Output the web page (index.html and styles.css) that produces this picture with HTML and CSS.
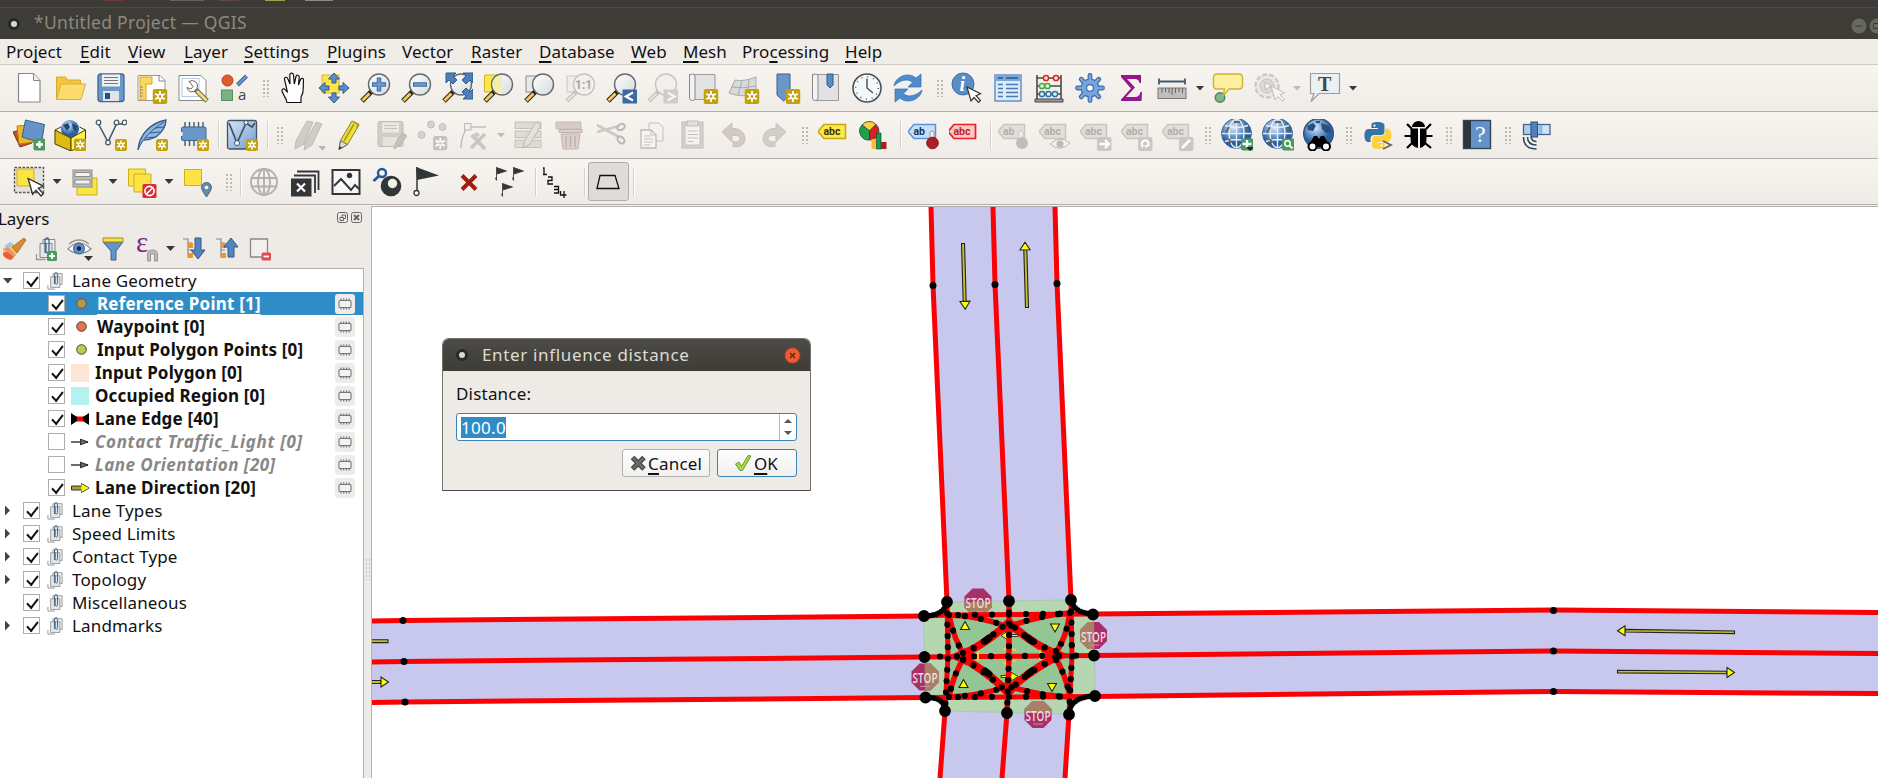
FILE: index.html
```html
<!DOCTYPE html>
<html lang="en">
<head>
<meta charset="utf-8">
<title>*Untitled Project — QGIS</title>
<link rel="stylesheet" href="styles.css">
</head>
<body>
<svg class="defs" width="0" height="0" aria-hidden="true">
<defs>
<linearGradient id="gGlass" x1="0" y1="0" x2="1" y2="1"><stop offset="0" stop-color="#fff"/><stop offset="1" stop-color="#d5dbdc"/></linearGradient>
<radialGradient id="gGlobe" cx=".4" cy=".3"><stop offset="0" stop-color="#dceaf8"/><stop offset=".55" stop-color="#6f9fd4"/><stop offset="1" stop-color="#2c5f9e"/></radialGradient>
<linearGradient id="gBlue" x1="0" y1="0" x2="1" y2="1"><stop offset="0" stop-color="#dbe7f3"/><stop offset="1" stop-color="#6f9bce"/></linearGradient>
<symbol id="star" viewBox="0 0 15 15"><rect width="15" height="15" rx="2.5" fill="#c4a20c"/><path d="M7.500 2v11M2.700 4.700l9.600 5.600M12.300 4.700l-9.600 5.600" stroke="#fff" stroke-width="1.900"/><circle cx="7.500" cy="7.500" r="3" fill="#fff"/><circle cx="7.500" cy="7.500" r="1.400" fill="#c4a20c"/></symbol>
<symbol id="gstar" viewBox="0 0 15 15"><rect width="15" height="15" rx="2.500" fill="#c6c3bf"/><path d="M7.500 2v11M2.700 4.700l9.600 5.600M12.300 4.700l-9.600 5.600" stroke="#fff" stroke-width="1.900"/><circle cx="7.500" cy="7.500" r="1.400" fill="#c6c3bf"/></symbol>
<symbol id="ptr" viewBox="0 0 16 18"><path d="M1 1l4 14 3-3.500 4.500 5 2-2-4.500-4.800 4.500-2z" fill="#fff" stroke="#333" stroke-width="1.200"/></symbol>
<symbol id="lens" viewBox="0 0 32 32"><path d="M13 19L3 29" stroke="#1f1f1f" stroke-width="5"/><path d="M10.500 21.500L3.500 28.500" stroke="#f4c854" stroke-width="3"/><circle cx="20" cy="12.500" r="10.500" fill="url(#gGlass)" stroke="#666b6e" stroke-width="1.400"/></symbol>
<symbol id="glens" viewBox="0 0 32 32"><path d="M13 19L3 29" stroke="#c2bfbb" stroke-width="4.500"/><path d="M10.500 21.500L3.500 28.500" stroke="#e4e0da" stroke-width="2.400"/><circle cx="20" cy="12.500" r="10.500" fill="#f2f0ec" stroke="#c8c5c1" stroke-width="1.400"/></symbol>

<symbol id="new" viewBox="0 0 32 32"><path d="M5.500 1.500h15l6.500 7v21.500H5.500z" fill="#fff" stroke="#888" stroke-width="1.200"/><path d="M20.500 1.500v7H27" fill="#eee" stroke="#888"/></symbol>
<symbol id="open" viewBox="0 0 32 32"><path d="M2.500 27V5h9l2 3h13v4" fill="#f3c53e" stroke="#d5a92b"/><path d="M2.500 27.500L7 12h24.500L27 27.500z" fill="#fcdc6c" stroke="#d9ae36"/></symbol>
<symbol id="save" viewBox="0 0 32 32"><rect x="3" y="2" width="26" height="27.500" rx="2.500" fill="#6b98cb" stroke="#3d6797" stroke-width="1.300"/><rect x="7" y="2.500" width="18" height="12" fill="#eef1f3"/><path d="M9 5.500h14M9 8.500h14M9 11.500h14" stroke="#777" stroke-width="1.200"/><rect x="8" y="19" width="16" height="10" fill="#dfe4ea"/><rect x="10" y="21" width="5" height="6" fill="#2d4d74"/></symbol>
<symbol id="layout" viewBox="0 0 32 32"><path d="M2 3.500h22l5 5v20H2z" fill="#fff" stroke="#999"/><path d="M4 5h12v7h-6v16H4z" fill="#fcd95c" stroke="#d5a521"/><path d="M4 15h3M4 18h3M4 21h3M4 24h3M23 3v6h6" stroke="#888" fill="none"/><use href="#star" x="16.500" y="17" width="15" height="15"/></symbol>
<symbol id="layoutm" viewBox="0 0 32 32"><path d="M2 3.500h22l5 5v20H2z" fill="#fff" stroke="#888"/><rect x="5" y="6.500" width="17" height="18" fill="none" stroke="#b6cbe6"/><path d="M18 17l12 12" stroke="#666" stroke-width="5"/><path d="M20 19l9.500 9.500" stroke="#f8d96b" stroke-width="3"/><path d="M12 9.500a5.500 5.500 0 0 1 8 7l-3 3a5.500 5.500 0 0 1-6.500-2l-.5-2 4 1.500 2-2.500z" fill="#fff" stroke="#666"/></symbol>
<symbol id="style" viewBox="0 0 32 32"><circle cx="9.500" cy="8.500" r="5.500" fill="#dd5c2d" stroke="#b34417"/><path d="M19.500 13L28.500 4" stroke="#3a6496" stroke-width="4"/><path d="M19.800 12.700L28.200 4.300" stroke="#6a97ca" stroke-width="2.300"/><rect x="3.500" y="18" width="11" height="10.500" fill="#76b284" stroke="#588e64"/><text x="20" y="28" font-family="Open Sans" font-size="15" fill="#444">a</text></symbol>
<symbol id="hand" viewBox="0 0 32 32"><path d="M10 30.500c-1-5-4-8-5-11.500-.6-2 2-3 3.500-1l2 2.500-3-13c-.4-2.500 2.500-3 3.200-1L13 12l-.2-9c0-2.500 3.400-2.500 3.700 0l.8 9L19 4.500c.4-2 3.300-1.500 3.200.6L21.500 13l2-5.500c.8-2 3.500-1.200 3 .8-1 8 1.500 10-2.500 17v5z" fill="#fff" stroke="#111" stroke-width="1.200"/></symbol>
<symbol id="pan" viewBox="0 0 32 32"><path d="M4 3h17v18H4z" fill="#fde64a" stroke="#d5b921"/><path d="M16 1l5.500 6h-3.500v4h-4V7h-3.500zM16 31l5.500-6h-3.500v-4h-4v4h-3.500zM1 16l6-5.500v3.500h4v4H7v3.500zM31 16l-6-5.500v3.500h-4v4h4v3.500z" fill="#5b8dc6" stroke="#31598a"/></symbol>
<symbol id="zin" viewBox="0 0 32 32"><use href="#lens"/><path d="M20 5.500v14M13 12.500h14" stroke="#3b6ba3" stroke-width="4.500"/><path d="M20 6.500v12M14 12.500h12" stroke="#6c9bd0" stroke-width="2.500"/></symbol>
<symbol id="zout" viewBox="0 0 32 32"><use href="#lens"/><path d="M13 12.500h14" stroke="#3b6ba3" stroke-width="4.500"/><path d="M14 12.500h12" stroke="#6c9bd0" stroke-width="2.500"/></symbol>
<symbol id="zfull" viewBox="0 0 32 32"><use href="#lens"/><path d="M5 1h10l-3 3 4 4-4 4-4-4-3 3zM32 1H22l3 3-4 4 4 4 4-4 3 3zM32 27H22l3-3-4-4 4-4 4 4 3-3z" fill="#4d80bb" stroke="#2f5b90"/></symbol>
<symbol id="zsel" viewBox="0 0 32 32"><path d="M2.500 3h13v17h-13z" fill="#fde64a" stroke="#d0b624"/><use href="#lens"/><path d="M20 3a9.500 9.500 0 0 0 0 19z" fill="#f3eea8"/></symbol>
<symbol id="zlay" viewBox="0 0 32 32"><path d="M3 4h13v16H3z" fill="#e9e9e8" stroke="#888"/><use href="#lens"/></symbol>
<symbol id="znat" viewBox="0 0 32 32"><path d="M3 4h13v16H3z" fill="#efedea" stroke="#c8c5c1"/><use href="#glens"/><text x="11" y="16.500" font-family="Roboto" font-weight="bold" font-size="12" fill="#aaa8a4">1:1</text></symbol>
<symbol id="zlast" viewBox="0 0 32 32"><use href="#lens"/><rect x="17.500" y="17.500" width="14.500" height="14" fill="#3c6aa0"/><path d="M28 20.500l-7 4 7 4" fill="none" stroke="#fff" stroke-width="2.400"/></symbol>
<symbol id="znext" viewBox="0 0 32 32"><use href="#glens"/><rect x="17.500" y="17.500" width="14.500" height="14" fill="#d0cdc9"/><path d="M21.500 20.500l7 4-7 4" fill="none" stroke="#f6f4f1" stroke-width="2.400"/></symbol>
<symbol id="nmap" viewBox="0 0 32 32"><path d="M7 2.500h21v25H7z" fill="#e2e3e3" stroke="#999"/><path d="M2.500 2v24q0 2.500 3 2.500T8 26V4q0-2-2.700-2T2.500 4" fill="#f3f3f3" stroke="#888"/><use href="#star" x="16.500" y="17" width="15" height="15"/></symbol>
<symbol id="n3d" viewBox="0 0 32 32"><path d="M7 8q8 2 21-3v17q-14 4-27-1z" fill="#d9dada" stroke="#aaa"/><path d="M4 15q12 2 24-1M14 9l-4 14M21 8l-2 15" stroke="#aaa" fill="none"/><use href="#star" x="16.500" y="17" width="15" height="15"/></symbol>
<symbol id="nbm" viewBox="0 0 32 32"><path d="M8 2h13v21l-6.500 6L8 23z" fill="#6a97c9" stroke="#365f90"/><use href="#star" x="16.500" y="17" width="15" height="15"/></symbol>
<symbol id="bms" viewBox="0 0 32 32"><path d="M7 2.500h21.500v26H5z" fill="#e0e2e3" stroke="#999"/><path d="M2.500 2v24q0 2.500 3 2.500T8 26V4q0-2-2.700-2T2.500 4" fill="#f3f3f3" stroke="#888"/><path d="M17 2h6v11l-3 3-3-3z" fill="#5b8cc3" stroke="#31598a"/></symbol>
<symbol id="clock" viewBox="0 0 32 32"><circle cx="16" cy="16" r="14" fill="#f4f8f8" stroke="#45525b" stroke-width="1.600"/><circle cx="16" cy="16" r="11.300" fill="none" stroke="#52616b" stroke-width="1.500" stroke-dasharray="1 4.910"/><path d="M16 6.500V16l6 5" fill="none" stroke="#4a5861" stroke-width="1.500"/></symbol>
<symbol id="refresh" viewBox="0 0 32 32"><path d="M2 14C3 5 16-1 24 6l5-4v13H16l4.500-4.500C16 6 8 8 2 14z" fill="#4f8acb" stroke="#3270b2" stroke-width=".7"/><path d="M30 18c-1 9-14 15-22 8l-5 4V17h13l-4.500 4.500C16 26 24 24 30 18z" fill="#4f8acb" stroke="#3270b2" stroke-width=".7"/></symbol>
<symbol id="ident" viewBox="0 0 32 32"><circle cx="12" cy="12" r="11" fill="#5b8cc6" stroke="#3f6fa7"/><text x="8.500" y="19" font-family="Liberation Serif" font-style="italic" font-weight="bold" font-size="20" fill="#fff">i</text><use href="#ptr" x="15" y="14" width="16" height="18"/></symbol>
<symbol id="table" viewBox="0 0 32 32"><rect x="3" y="3" width="26" height="26" fill="#dcebf8" stroke="#5a8ac2" stroke-width="1.400"/><path d="M3 3h26v6H3z" fill="#7ca7d8"/><path d="M6 6h5M14 6h12" stroke="#3b6ba3" stroke-width="2"/><path d="M6 12.500h5M6 16.500h5M6 20.500h5M6 24.500h5M14 12.500h12M14 16.500h12M14 20.500h12M14 24.500h12" stroke="#4d78ab" stroke-width="1.500"/></symbol>
<symbol id="abacus" viewBox="0 0 32 32"><path d="M4 3v25M28 3v25M4 6h24M4 14h24M4 22h24" stroke="#494949" stroke-width="1.600"/><path d="M2 27h28v3H2z" fill="#999" stroke="#444"/><g stroke-width="1.500" fill="#fbe0dc"><g stroke="#d22"><circle cx="13" cy="6" r="2.600"/><circle cx="23" cy="6" r="2.600"/></g><g stroke="#3faa40" fill="#e4fae0"><circle cx="9" cy="14" r="2.600"/><circle cx="14.500" cy="14" r="2.600"/></g><g stroke="#336f9f" fill="#e0f0fa"><circle cx="9" cy="22" r="2.600"/><circle cx="15.500" cy="22" r="2.600"/><circle cx="22" cy="22" r="2.600"/></g></g></symbol>
<symbol id="gear" viewBox="0 0 32 32"><g stroke="#3a6ba8" stroke-width="4.800" stroke-linecap="round"><path id="spokes" d="M16 3.500v25M3.500 16h25M7.200 7.200l17.600 17.600M24.800 7.200L7.200 24.800"/></g><circle cx="16" cy="16" r="9.500" fill="#3a6ba8"/><g stroke="#79a6da" stroke-width="2.600" stroke-linecap="round"><use href="#spokes"/></g><circle cx="16" cy="16" r="8.300" fill="#79a6da"/><circle cx="16" cy="16" r="3.400" fill="#fff" stroke="#3a6ba8" stroke-width="1.200"/></symbol>
<symbol id="sigma" viewBox="0 0 32 32"><path d="M6 3h20v8h-1.500q-.5-4-5-4H12l8 8.500L11 25h9q4.500 0 5.500-5H27l-.5 9H6v-1.500L16 16.500 6 5z" fill="#97148f"/></symbol>
<symbol id="ruler" viewBox="0 0 32 32"><path d="M3 9.500h26M3 6.500v6M29 6.500v6" stroke="#44586b" stroke-width="1.800"/><rect x="2" y="16" width="28" height="10.500" fill="#bfbfbf" stroke="#777"/><path d="M6 16v5M9.500 16v4M13 16v5M16 16v7M19.500 16v5M23 16v4M26.500 16v5" stroke="#666"/></symbol>
<symbol id="tip" viewBox="0 0 32 32"><circle cx="8" cy="25.500" r="4.700" fill="#7cb98b" stroke="#4d7f5a" stroke-width="1.500"/><path d="M5 2h22q3.500 0 3.500 4v7q0 4-3.500 4H17l-6 7 1.500-7H5q-3.500 0-3.500-4V6q0-4 3.500-4z" fill="#fcf0a0" stroke="#ccb42e" stroke-width="1.400"/></symbol>
<symbol id="gplay" viewBox="0 0 32 32"><circle cx="14" cy="14" r="11.500" fill="#eceae6" stroke="#cdcac6" stroke-width="2.500" stroke-dasharray="5 2"/><circle cx="14" cy="14" r="7" fill="#dddad6" stroke="#c4c1bd"/><path d="M12 10v8l6-4z" fill="#f6f4f1" stroke="#bbb"/><path d="M18 14l4 14 3-3.500 4.500 5 2-2-4.500-4.800 4.500-2z" fill="#f5f3f0" stroke="#c0bdb9"/></symbol>
<symbol id="tnote" viewBox="0 0 32 32"><path d="M1.500 1.500h29v20H10l-8 8 3-8H1.500z" fill="#e9f1f5" stroke="#999ea1" stroke-width="1.200"/><text x="9" y="18.500" font-family="Liberation Serif" font-weight="bold" font-size="20" fill="#41474b">T</text></symbol>

<symbol id="dsm" viewBox="0 0 32 32"><path d="M0 13l13-4 6 15-12 4z" fill="#bf5327" stroke="#8a3512"/><path d="M4 7l16-1 1 17-15 2z" fill="#f0b625" stroke="#b67e0c"/><path d="M12.500 1l19 4.500-3 18.500L9 18z" fill="#6693c8" stroke="#34608f"/><rect x="20.500" y="19.500" width="12" height="12" rx="2" fill="#4c9960"/><path d="M26.500 22v7M23 25.500h7" stroke="#fff" stroke-width="2.300"/></symbol>
<symbol id="gpkg" viewBox="0 0 32 32"><circle cx="16" cy="10" r="9" fill="url(#gGlobe)"/><path d="M9 6l5-2 2 4-3 4zM18 4l5 3-1 5-3-2z" fill="#25476f"/><path d="M1 11l16 8v13L1 25z" fill="#dfba13" stroke="#4c3b08"/><path d="M31.500 11L17 19v13l14.500-7z" fill="#fdf14e" stroke="#4c3b08"/><path d="M1 11l6-3M31.500 11l-6-3" stroke="#4c3b08"/><use href="#star" x="20" y="19.500" width="12.500" height="12.500"/></symbol>
<symbol id="shp" viewBox="0 0 32 32"><path d="M3.500 5L13 23 21.500 5H29" fill="none" stroke="#455a6c" stroke-width="1.600"/><g fill="#fff" stroke="#455a6c" stroke-width="1.300"><circle cx="3.500" cy="3.500" r="2.300"/><circle cx="13" cy="23.500" r="2.300"/><circle cx="21.500" cy="3.500" r="2.300"/><circle cx="29.500" cy="3.500" r="2.300"/></g><use href="#star" x="20" y="20" width="12" height="12"/></symbol>
<symbol id="spl" viewBox="0 0 32 32"><path d="M2 31C3 16 14 4 30 1c0 8-5 13-10 17-4 2-9 3-12 3" fill="#8db6e1" stroke="#31598a" stroke-width="1.300"/><path d="M2 31C6 20 15 11 28 3M10 19l9-1M14 14l10-1M19 9l9-1" fill="none" stroke="#31598a"/><use href="#star" x="20" y="20" width="12" height="12"/></symbol>
<symbol id="mem" viewBox="0 0 32 32"><path d="M8 3v24M12.500 3v24M17 3v24M21.500 3v24M26 3v24" stroke="#44586b" stroke-width="1.400"/><rect x="4.500" y="8" width="24.500" height="13.500" rx="1.500" fill="#6a97ca" stroke="#3a6492"/><path d="M4 13v4" stroke="#f4f1ec" stroke-width="3"/><use href="#star" x="20" y="20" width="12" height="12"/></symbol>
<symbol id="virt" viewBox="0 0 32 32"><rect x="1.500" y="1.500" width="29" height="28.500" rx="2" fill="url(#gBlue)" stroke="#3e5468" stroke-width="1.300"/><path d="M3 4l8 20 9-20 6 4 3-4" fill="none" stroke="#3e5468" stroke-width="1.800"/><circle cx="11" cy="24" r="2.500" fill="#fff" stroke="#3e5468"/><circle cx="20" cy="3.500" r="2" fill="#fff" stroke="#3e5468"/><use href="#star" x="20" y="20" width="12" height="12"/></symbol>
<symbol id="edits" viewBox="0 0 32 32"><path d="M2 30l1-8L14 2l6 1-9 22zM11 31l1-7L23 3l6 2-10 21z" fill="#d0ccc7" stroke="#c0bbb6"/><path d="M25 27h9l-4.500 4.500z" fill="#bab6b2"/></symbol>
<symbol id="pencil" viewBox="0 0 32 32"><path d="M5 30.500l1.500-9L18 2l7 4L13.500 25.500z" fill="#f2df3b" stroke="#857c32"/><path d="M10 22L20 5M20 2.800l4.500 2.500-2 3.500" stroke="#a79822" fill="none" stroke-width="1.500"/><path d="M5 30.500l1.500-9 7 4z" fill="#e0ddd5" stroke="#666"/><path d="M5 30.500l.5-3.500 2.500 1.500z" fill="#333"/></symbol>
<symbol id="gsave" viewBox="0 0 32 32"><rect x="3" y="2.500" width="25" height="25" rx="2" fill="#d0cdc8" stroke="#bfbbb7"/><rect x="7" y="3.500" width="17" height="10" fill="#ebe8e4"/><path d="M9 6.500h13M9 9.500h13" stroke="#c4c0bb"/><rect x="8" y="18" width="14" height="9" fill="#e6e2de"/><path d="M19 30l2-7 7-9 4 3-7 9z" fill="#cbbfba" stroke="#bdb4af"/></symbol>
<symbol id="gpts" viewBox="0 0 32 32"><g fill="#d5d3d0" stroke="#c0bdba"><circle cx="15" cy="5.500" r="3.500"/><circle cx="26.500" cy="8" r="3.500"/><circle cx="5.500" cy="16" r="3.500"/></g><use href="#gstar" x="17" y="17" width="14.500" height="14.500"/></symbol>
<symbol id="gvert" viewBox="0 0 32 32"><path d="M4 29C4 20 6 14 11 8h18" fill="none" stroke="#c2bebb" stroke-width="1.500"/><rect x="7.500" y="4.500" width="6.500" height="6.500" fill="#efedea" stroke="#bdb9b5"/><path d="M15 16l13 14M28 15L14 29" stroke="#c9c6c1" stroke-width="3.500"/><path d="M13 17l7-4 3 3-6 5z" fill="#cdc9c5"/></symbol>
<symbol id="gattr" viewBox="0 0 32 32"><g fill="#dedbd2" stroke="#c6c2ba"><rect x="2" y="3" width="26" height="6.500"/><rect x="2" y="12" width="26" height="6.500"/><rect x="2" y="21" width="26" height="7.500"/></g><path d="M10 29l2-8L23 3l5 3-11 19z" fill="#e6e0dc" stroke="#c0b9b5"/></symbol>
<symbol id="gtrash" viewBox="0 0 32 32"><path d="M2 3h25v7H2z" fill="#d5cbc8" stroke="#c7bbb8"/><path d="M5 10.500h23v3H5zM7 15h19l-2 15H9z" fill="#dccfcc" stroke="#c2b2af"/><path d="M12 17v11M16.500 17v11M21 17v11" stroke="#c2b2af" stroke-width="1.500"/></symbol>
<symbol id="gcut" viewBox="0 0 32 32"><path d="M2 6l22 12M2 13l22-6" stroke="#ccc9c5" stroke-width="2.600"/><ellipse cx="26" cy="8" rx="4" ry="2.800" transform="rotate(-30 26 8)" fill="none" stroke="#bbb7b3" stroke-width="2"/><ellipse cx="26" cy="21" rx="4" ry="2.800" transform="rotate(45 26 21)" fill="none" stroke="#bbb7b3" stroke-width="2"/></symbol>
<symbol id="gcopy" viewBox="0 0 32 32"><path d="M13 4h10l4 4v14H13z" fill="#f3f1ee" stroke="#c3c0bc"/><path d="M5 11h10l5 5v13H5z" fill="#f7f5f3" stroke="#bfbcb8" stroke-width="1.300"/><path d="M8 17h7M8 20h9M8 23h9M8 26h6M15 11v5h5" stroke="#c3c0bc" fill="none"/></symbol>
<symbol id="gpaste" viewBox="0 0 32 32"><rect x="5" y="3" width="21" height="26" fill="#d6d3cf" stroke="#bfbcb8"/><rect x="8" y="6" width="15" height="20" fill="#f5f3f0" stroke="#c3c0bc"/><path d="M10 2h11v5H10z" fill="#e3e0dc" stroke="#bfbcb8"/><path d="M10.500 12h10M10.500 15.500h10M10.500 19h10M10.500 22.500h6" stroke="#c3c0bc"/></symbol>
<symbol id="gundo" viewBox="0 0 32 32"><path d="M4 13L14 4v5.500c9-.5 13 5 13 11-1 6-5 8-12 7v-5c4 1 7 0 7-3 0-2.500-3-3.500-8-3V23z" fill="#d2c9c6" stroke="#c8bfbc"/></symbol>
<symbol id="gredo" viewBox="0 0 32 32"><path d="M27 13L17 4v5.500c-9-.5-13 5-13 11 1 6 5 8 12 7v-5c-4 1-7 0-7-3 0-2.500 3-3.500 8-3V23z" fill="#d0cfc9" stroke="#c3c4bd"/></symbol>
<symbol id="lab" viewBox="0 0 32 32"><path d="M0 12.500L6 5.500h21.500v14H6z" fill="#fce94f" stroke="#c9a40e" stroke-width="1.500"/><text x="5.500" y="16" class="abc" fill="#3d3500">abc</text></symbol>
<symbol id="chart" viewBox="0 0 32 32"><path d="M10.500 12L3 6a9 9 0 0 1 14-.5z" fill="#fbd23a" stroke="#333" stroke-width=".8"/><path d="M10.500 12V21A9 9 0 0 1 3 6z" fill="#1ba34c" stroke="#333" stroke-width=".8"/><path d="M10.500 12V21A9 9 0 0 0 17 5.500z" fill="#d8201f" stroke="#333" stroke-width=".8"/><path d="M12.500 20h5v10h-5z" fill="#fbbc2d"/><path d="M17.500 14h4.500v16h-4.500z" fill="#159a56" stroke="#0b4d2b" stroke-width=".7"/><path d="M22 23h5.500v7H22z" fill="#b71a17"/></symbol>
<symbol id="labpin" viewBox="0 0 32 32"><path d="M0 12.500L6 5.500h21.500v14H6z" fill="#c4e0fa" stroke="#5d93d5" stroke-width="1.500"/><text x="5.500" y="16" class="abc" fill="#17375a">ab</text><path d="M22 13q2-2 4 0v8h-4z" fill="#f2f2f2" stroke="#999"/><circle cx="24.500" cy="24" r="5.800" fill="#ad1d22" stroke="#83161a"/></symbol>
<symbol id="labred" viewBox="0 0 32 32"><path d="M-1 12.500L5 5.500h21.500v14H5z" fill="#fbc8c6" stroke="#ee1c24" stroke-width="1.700"/><text x="4.500" y="16" class="abc" fill="#c01f26">abc</text></symbol>
<symbol id="glab" viewBox="0 0 32 32"><path d="M0 12.500L6 5.500h20.500v14H6z" fill="#e2dfda" stroke="#c9c6c0" stroke-width="1.500"/><text x="5" y="16" class="abc" fill="#b2aeaa">abc</text></symbol>
<symbol id="glpin" viewBox="0 0 32 32"><path d="M0 12.500L6 5.500h20.500v14H6z" fill="#e2dfda" stroke="#c9c6c0" stroke-width="1.500"/><text x="5" y="16" class="abc" fill="#b2aeaa">ab</text><path d="M21 13q2-2 4 0v8h-4z" fill="#f2f2f2" stroke="#ccc"/><circle cx="24" cy="24" r="6" fill="#c4bcba"/></symbol>
<symbol id="gleye" viewBox="0 0 32 32"><use href="#glab"/><path d="M11 25q10-9 20-1-10 10-20 1z" fill="#f3f1ee" stroke="#bbb8b4"/><circle cx="21" cy="25" r="3.500" fill="#bdbab6"/></symbol>
<symbol id="glmove" viewBox="0 0 32 32"><use href="#glab"/><rect x="17" y="18" width="14.500" height="14" rx="2" fill="#cbc8c4"/><path d="M19.500 25h9M25 21l4 4-4 4" fill="none" stroke="#fff" stroke-width="2.300"/></symbol>
<symbol id="glrot" viewBox="0 0 32 32"><use href="#glab"/><rect x="17" y="18" width="14.500" height="14" rx="2" fill="#cbc8c4"/><path d="M22 28c-4-5 3-9 5-5s-2 4-3 5" fill="none" stroke="#fff" stroke-width="2.200"/></symbol>
<symbol id="gledit" viewBox="0 0 32 32"><use href="#glab"/><rect x="17" y="18" width="14.500" height="14" rx="2" fill="#cbc8c4"/><path d="M20 29l8-8" stroke="#fff" stroke-width="2.600"/></symbol>
<symbol id="globe" viewBox="0 0 32 32"><circle cx="15.500" cy="14.500" r="15" fill="url(#gGlobe)" stroke="#4a6f9e"/><path d="M15.500 0v29M1 14.500h29M4 6.500q12 4 23 0M4 22.500q12-4 23 0" fill="none" stroke="#e9eef4" stroke-width="1.400"/><ellipse cx="15.500" cy="14.500" rx="7.500" ry="14.200" fill="none" stroke="#e9eef4" stroke-width="1.400"/><path d="M8 8l-3 6M25 8l2 5M8 20l2 4M13 3h6" stroke="#6b6560" stroke-width="2"/></symbol>
<symbol id="gadd" viewBox="0 0 32 32"><use href="#globe"/><rect x="20" y="19.500" width="12.500" height="12" rx="2" fill="#4c9960"/><path d="M26 21v8M21.500 25h9" stroke="#fff" stroke-width="2.400"/><path d="M25 28h8l-4 4z" fill="#222"/></symbol>
<symbol id="gfind" viewBox="0 0 32 32"><use href="#globe"/><rect x="20" y="19.500" width="12.500" height="12" rx="2" fill="#4c9960"/><circle cx="25.500" cy="24.500" r="2.700" fill="none" stroke="#fff" stroke-width="1.500"/><path d="M27.500 26.500l3 3" stroke="#fff" stroke-width="1.800"/></symbol>
<symbol id="gbino" viewBox="0 0 32 32"><circle cx="15.500" cy="14.500" r="14.800" fill="url(#gGlobe)" stroke="#33527a" stroke-width="1.500"/><path d="M4 7l6-3 3 3-3 5-5-1zM18 4l8 3 2 6-5 1-4-4zM13 2h4v2h-4z" fill="#2c4d76"/><path d="M6 26l5-9h3l2 3 2-3h3l5 9v2H6z" fill="#000"/><circle cx="9.500" cy="27.500" r="4" fill="#fff" stroke="#000" stroke-width="2"/><circle cx="23" cy="27.500" r="4" fill="#fff" stroke="#000" stroke-width="2"/></symbol>
<symbol id="py" viewBox="0 0 32 32"><g transform="translate(2.500 3) scale(1.120)"><path d="M14.250.18l.9.2.73.26.59.3.45.32.34.34.25.34.16.33.1.3.04.26.02.2-.01.13V8.500l-.05.63-.13.55-.21.46-.26.38-.3.31-.33.25-.35.19-.35.14-.33.1-.3.07-.26.04-.21.02H8.770l-.69.05-.59.14-.5.22-.41.27-.33.32-.27.35-.2.36-.15.37-.1.35-.07.32-.04.27-.02.21v3.060H3.170l-.21-.03-.28-.07-.32-.12-.35-.18-.36-.26-.36-.36-.35-.46-.32-.59-.28-.73-.21-.88-.14-1.050-.05-1.230.06-1.220.16-1.040.24-.87.32-.71.36-.57.4-.44.42-.33.42-.24.4-.16.36-.1.32-.05.24-.01h.16l.06.01h8.160v-.83H6.180l-.01-2.750-.02-.37.05-.34.11-.31.17-.28.25-.26.31-.23.38-.2.44-.18.51-.15.58-.12.64-.1.71-.06.77-.04.84-.02 1.270.05z" fill="#3674a8"/><circle cx="8.900" cy="3.200" r="1" fill="#fff"/><g transform="rotate(180 12 12)"><path d="M14.250.18q3 .5 3 2.500V8.500q-.2 3-3.200 3.200H8.770q-3 .3-3.200 3.400v3.060H3.170Q0 17 0 12t3.400-5.900h8.800v-.83H6.180V2.200Q6.500 0 12 0z" fill="#fdd03f"/><circle cx="8.900" cy="3.200" r="1" fill="#fff"/></g></g><path d="M21 22l8 4-8 4" fill="none" stroke="#6c6550" stroke-width="1.800"/></symbol>
<symbol id="bug" viewBox="0 0 32 32"><path d="M9 8a6 5.500 0 0 1 13 0zM7.500 9.500H15V29q-8-2-7.500-10zM17 9.500h6.500V19q.5 8-6.500 10z" fill="#000"/><path d="M9 10L4 5M23 10l5-5M8 17H1.500M23 17h6.500M9 24l-5 5M22 24l6 5" stroke="#000" stroke-width="2.200"/></symbol>
<symbol id="help" viewBox="0 0 32 32"><rect x="1.500" y="1.500" width="27" height="28" fill="#6391c8" stroke="#31455a" stroke-width="1.400"/><path d="M2 2h7v27H2z" fill="#2a3743"/><text x="13" y="23" font-family="Liberation Serif" font-size="24" fill="#fff">?</text></symbol>
<symbol id="sat" viewBox="0 0 32 32"><rect x="2.500" y="5.500" width="8" height="10" fill="#a9d0ee" stroke="#44668a" stroke-width="1.300"/><rect x="15" y="5.500" width="14" height="10" fill="#cfe5f6" stroke="#44668a" stroke-width="1.300"/><path d="M19.500 6v9" stroke="#8abce5" stroke-width="4"/><rect x="10" y="3" width="6.500" height="15" fill="#4f82bd" stroke="#2d4f78"/><path d="M2.500 18q0 12 13 12M6.500 18q0 8 9 8M10 18q1 4.500 5.500 4.500" fill="none" stroke="#2c4260" stroke-width="1.500"/></symbol>

<symbol id="sel" viewBox="0 0 32 32"><path d="M1.500 1.500h29v25h-29z" fill="#e4e3e1" stroke="#555" stroke-width="1.400" stroke-dasharray="2.500 1.500"/><path d="M4 3h17v17H4z" fill="#fbe545" stroke="#cfae1a"/><use href="#ptr" x="14" y="11" width="18" height="21"/></symbol>
<symbol id="selv" viewBox="0 0 32 32"><path d="M8 12h20v17H8z" fill="#fbe545" stroke="#cfae1a"/><rect x="4" y="4" width="19" height="17" fill="#bdbdbb" stroke="#8c8c8b"/><path d="M6 6.500h15v4H6zM6 14h15v4H6z" fill="#f2f2f2" stroke="#8c8c8b"/></symbol>
<symbol id="desel" viewBox="0 0 32 32"><path d="M3.500 3h17v17h-17z" fill="#fbe545" stroke="#cfae1a"/><path d="M9 8h17v18H9z" fill="#fbe545" stroke="#cfae1a"/><rect x="17.500" y="18" width="14" height="14" rx="1.500" fill="#dd2b35"/><circle cx="24.500" cy="25" r="4.600" fill="#dd2b35" stroke="#fff" stroke-width="1.700"/><path d="M21 28.500l7-7" stroke="#fff" stroke-width="1.700"/></symbol>
<symbol id="selloc" viewBox="0 0 32 32"><path d="M3.500 3.500h17v16h-17z" fill="#fbe545" stroke="#cfae1a"/><path d="M25.500 31q-5-7-5-9.500a5 5 0 0 1 10 0q0 2.500-5 9.500z" fill="#6b8aa3" stroke="#4e6b82"/><circle cx="25.500" cy="21.500" r="1.800" fill="#fff"/></symbol>
<symbol id="wire" viewBox="0 0 32 32"><g fill="none" stroke="#b3b0ad" stroke-width="1.900"><circle cx="16" cy="16" r="13"/><ellipse cx="16" cy="16" rx="6" ry="13"/><path d="M16 3v26M3.500 12h25M3.500 20.500h25"/></g></symbol>
<symbol id="stack" viewBox="0 0 32 32"><path d="M8 5.500h21.500V24M5 9.500h21V27" fill="none" stroke="#333638" stroke-width="1.800"/><path d="M2 12.500h20.500v18H2z" fill="#333638"/><path d="M8 17.500l8 8M16 17.500l-8 8" stroke="#fff" stroke-width="2.200"/></symbol>
<symbol id="img" viewBox="0 0 32 32"><rect x="2.500" y="4" width="27" height="24" fill="#f8f7f5" stroke="#333638" stroke-width="2"/><path d="M4 20l7-7 10 11 4-5 4 4" fill="none" stroke="#333638" stroke-width="2"/><circle cx="19.500" cy="9.500" r="2.700" fill="#333638"/></symbol>
<symbol id="eye2" viewBox="0 0 32 32"><circle cx="20" cy="20" r="10.300" fill="#333638"/><circle cx="21.500" cy="17.500" r="4.700" fill="#f4f1ed"/><circle cx="11" cy="7" r="4" fill="none" stroke="#215a97" stroke-width="2.400"/><path d="M8 10l-5.500 5" stroke="#215a97" stroke-width="2.800"/></symbol>
<symbol id="flag" viewBox="0 0 32 32"><path d="M4 1l23 8.500L5 14z" fill="#333638"/><path d="M5 1v24" stroke="#333638" stroke-width="1.500"/><circle cx="4.500" cy="27" r="2.500" fill="#fff" stroke="#333638" stroke-width="1.300"/></symbol>
<symbol id="ex" viewBox="0 0 32 32"><path d="M9 9.500l14 14M23 9.500l-14 14" stroke="#a31c10" stroke-width="4"/></symbol>
<symbol id="flags" viewBox="0 0 32 32"><path id="fl" d="M2.500 1.500l10 3.500L3 8M2.500 1v9.500q-2 3 .5 4" fill="#333638" stroke="#333638" stroke-width=".8"/><use href="#fl" x="17"/><use href="#fl" x="6" y="16"/></symbol>
<symbol id="nums" viewBox="0 0 32 32"><path d="M-2 2h3v6M-2 8.500h6M5 11h4v3.500H5V18h5M11 20.500h4.500V27H11M11 23.500h4M17.500 25v4h6M21 25v7" fill="none" stroke="#111" stroke-width="1.300"/></symbol>
<symbol id="trap" viewBox="0 0 32 32"><path d="M8 9.500h15l4 13H5z" fill="none" stroke="#111" stroke-width="1.300"/></symbol>

<symbol id="brush" viewBox="0 0 26 26"><path d="M2 13l8-6 8 8-7 8q-6-1-9-5z" fill="#f6cf3d"/><path d="M2 17l5-2 6 6-3 3q-6-1-8-5z" fill="#e9602e"/><path d="M3 10l6-4 4 2-6 4z" fill="#9cc8ea"/><path d="M2 13l5-2 8 8-2 2z" fill="#ef8d7a"/><path d="M11 11l5 6 9-13-2-2z" fill="#d68c37" stroke="#9b5a13" stroke-width=".7"/></symbol>
<symbol id="group" viewBox="0 0 26 26"><path d="M9 3.500h12v14H9z" fill="#e9edf0" stroke="#888"/><path d="M6 7.500h12v14H6z" fill="#e0e6ea" stroke="#888"/><path d="M2.500 18v5.500h9" fill="none" stroke="#999" stroke-width="1.300"/><path d="M11 17V5q0-3 2-3t2 3v10q0 2-1.500 2T12 15V7" fill="none" stroke="#4c6a85" stroke-width="1.300"/></symbol>
<symbol id="groupadd" viewBox="0 0 26 26"><use href="#group"/><rect x="13" y="15" width="10" height="10" rx="1.500" fill="#4c9960"/><path d="M18 17v6M15 20h6" stroke="#fff" stroke-width="1.900"/></symbol>
<symbol id="eye" viewBox="0 0 26 26"><path d="M1 13q11-12 23 0-12 9-23 0z" fill="#fff" stroke="#888" stroke-width="1.200"/><path d="M2 8q10-8 20 0" fill="none" stroke="#999" stroke-width="1.300"/><circle cx="12" cy="12.500" r="5.500" fill="#5d8fca" stroke="#335f93"/><circle cx="12" cy="12.500" r="2.200" fill="#13263c"/><path d="M17 20h9l-4.500 5z" fill="#333"/></symbol>
<symbol id="funnel" viewBox="0 0 26 26"><path d="M3 6h20l-7 9v9h-5v-9z" fill="#6693c8" stroke="#38638f"/><path d="M3 2h20v4H3z" fill="#fde33e" stroke="#a08b1b"/></symbol>
<symbol id="eps" viewBox="0 0 26 26"><text x="3" y="16" font-family="Liberation Serif" font-size="29" fill="#7b2d83">ε</text><path d="M14.500 25v-7q0-4 5-4t5 4v7h-3v-7h-4v7z" fill="#b9bbbc" stroke="#888" stroke-width=".8"/></symbol>
<symbol id="expand" viewBox="0 0 26 26"><path d="M2 3h5v18h4M7 7h4M7 14h4" fill="none" stroke="#888" stroke-width="1.200"/><path d="M7 7h5v5H7zM7 17h5v5H7z" fill="#f7941d"/><path d="M14 2h6v12h4l-7 9-7-9h4z" fill="#5484bd" stroke="#33588a"/></symbol>
<symbol id="collapse" viewBox="0 0 26 26"><path d="M2 3h5v18h4M7 7h4M7 14h4" fill="none" stroke="#888" stroke-width="1.200"/><path d="M7 7h5v5H7zM7 17h5v5H7z" fill="#f7941d"/><path d="M14 21h6V11h4l-7-9-7 9h4z" fill="#5484bd" stroke="#33588a"/></symbol>
<symbol id="remove" viewBox="0 0 26 26"><path d="M3.500 3h17v18h-17z" fill="#f2f1ef" stroke="#888" stroke-width="1.300"/><rect x="14.500" y="16.500" width="9.500" height="8" rx="1.500" fill="#e04a50"/><path d="M16.500 20.500h5.500" stroke="#fff" stroke-width="1.800"/></symbol>
<symbol id="chip" viewBox="0 0 20 20"><rect width="20" height="20" rx="3" fill="#ececeb"/><path d="M6 4.500v11M8.700 4.500v11M11.400 4.500v11M14.100 4.500v11" stroke="#777" stroke-width="1.200"/><rect x="4" y="6.500" width="12" height="7" rx="1" fill="#f2f2f1" stroke="#777" stroke-width="1.100"/></symbol>
<symbol id="lane-in" viewBox="0 0 19 14"><path d="M0 7h18" stroke="#333" stroke-width="1.500"/><path d="M10 4l8 3-8 3z" fill="#667" stroke="#222"/></symbol>
</defs>
</svg>

<div class="desktop"><i class="d1"></i><i class="d2"></i><i class="d3"></i><i class="d4"></i><i class="d5"></i></div>
<header class="titlebar">
  <span class="dot"></span><span class="title">*Untitled Project — QGIS</span>
  <span class="winbtns"><svg width="40" height="16"><circle cx="8" cy="8" r="7.500" fill="#696761"/><path d="M4.500 8h7" stroke="#3a3935"/><circle cx="26" cy="8" r="7.500" fill="#696761"/><path d="M22.500 5.500h7v5h-7z" fill="none" stroke="#3a3935"/></svg></span>
</header>
<nav class="menubar">
  <span class="m1">Pro<u>j</u>ect</span><span class="m2"><u>E</u>dit</span><span class="m3"><u>V</u>iew</span><span class="m4"><u>L</u>ayer</span><span class="m5"><u>S</u>ettings</span><span class="m6"><u>P</u>lugins</span><span class="m7">Vect<u>o</u>r</span><span class="m8"><u>R</u>aster</span><span class="m9"><u>D</u>atabase</span><span class="m10"><u>W</u>eb</span><span class="m11"><u>M</u>esh</span><span class="m12">Pro<u>c</u>essing</span><span class="m13"><u>H</u>elp</span>
</nav>
<div class="toolbar first">
<svg class="ic"><use href="#new"/></svg><svg class="ic"><use href="#open"/></svg><svg class="ic"><use href="#save"/></svg><svg class="ic"><use href="#layout"/></svg><svg class="ic"><use href="#layoutm"/></svg><svg class="ic"><use href="#style"/></svg><i class="grip"></i>
<svg class="ic"><use href="#hand"/></svg><svg class="ic"><use href="#pan"/></svg><svg class="ic"><use href="#zin"/></svg><svg class="ic"><use href="#zout"/></svg><svg class="ic"><use href="#zfull"/></svg><svg class="ic"><use href="#zsel"/></svg><svg class="ic"><use href="#zlay"/></svg><svg class="ic"><use href="#znat"/></svg><svg class="ic"><use href="#zlast"/></svg><svg class="ic"><use href="#znext"/></svg><svg class="ic"><use href="#nmap"/></svg><svg class="ic"><use href="#n3d"/></svg><svg class="ic"><use href="#nbm"/></svg><svg class="ic"><use href="#bms"/></svg><svg class="ic"><use href="#clock"/></svg><svg class="ic"><use href="#refresh"/></svg><i class="grip"></i>
<svg class="ic"><use href="#ident"/></svg><svg class="ic"><use href="#table"/></svg><svg class="ic"><use href="#abacus"/></svg><svg class="ic"><use href="#gear"/></svg><svg class="ic"><use href="#sigma"/></svg><svg class="ic"><use href="#ruler"/></svg><i class="drop"></i><svg class="ic"><use href="#tip"/></svg><svg class="ic"><use href="#gplay"/></svg><i class="drop off"></i><svg class="ic"><use href="#tnote"/></svg><i class="drop"></i>
</div>
<div class="toolbar">
<svg class="ic"><use href="#dsm"/></svg><svg class="ic"><use href="#gpkg"/></svg><svg class="ic"><use href="#shp"/></svg><svg class="ic"><use href="#spl"/></svg><svg class="ic"><use href="#mem"/></svg><i class="sep"></i><svg class="ic"><use href="#virt"/></svg><i class="sep"></i><i class="grip early"></i>
<svg class="ic"><use href="#edits"/></svg><svg class="ic"><use href="#pencil"/></svg><svg class="ic"><use href="#gsave"/></svg><svg class="ic"><use href="#gpts"/></svg><svg class="ic"><use href="#gvert"/></svg><i class="drop off"></i><svg class="ic"><use href="#gattr"/></svg><svg class="ic"><use href="#gtrash"/></svg><svg class="ic"><use href="#gcut"/></svg><svg class="ic"><use href="#gcopy"/></svg><svg class="ic"><use href="#gpaste"/></svg><svg class="ic"><use href="#gundo"/></svg><svg class="ic"><use href="#gredo"/></svg><i class="grip early"></i>
<svg class="ic"><use href="#lab"/></svg><svg class="ic"><use href="#chart"/></svg><i class="sep"></i><svg class="ic"><use href="#labpin"/></svg><svg class="ic"><use href="#labred"/></svg><i class="sep"></i><svg class="ic"><use href="#glpin"/></svg><svg class="ic"><use href="#gleye"/></svg><svg class="ic"><use href="#glmove"/></svg><svg class="ic"><use href="#glrot"/></svg><svg class="ic"><use href="#gledit"/></svg><i class="grip early"></i>
<svg class="ic"><use href="#gadd"/></svg><svg class="ic"><use href="#gfind"/></svg><svg class="ic"><use href="#gbino"/></svg><i class="grip early"></i><svg class="ic"><use href="#py"/></svg><svg class="ic"><use href="#bug"/></svg><i class="grip early"></i><svg class="ic"><use href="#help"/></svg><i class="grip early"></i><svg class="ic"><use href="#sat"/></svg>
</div>
<div class="toolbar last">
<svg class="ic"><use href="#sel"/></svg><i class="drop"></i><svg class="ic"><use href="#selv"/></svg><i class="drop"></i><svg class="ic"><use href="#desel"/></svg><i class="drop"></i><svg class="ic"><use href="#selloc"/></svg><i class="grip"></i><i class="sep"></i>
<svg class="ic"><use href="#wire"/></svg><svg class="ic"><use href="#stack"/></svg><svg class="ic"><use href="#img"/></svg><svg class="ic"><use href="#eye2"/></svg><svg class="ic"><use href="#flag"/></svg><svg class="ic"><use href="#ex"/></svg><svg class="ic"><use href="#flags"/></svg><i class="sep"></i><svg class="ic"><use href="#nums"/></svg><i class="sep"></i><span class="pressed"><svg><use href="#trap"/></svg></span><i class="sep"></i>
</div>

<main class="work">
<aside class="panel">
  <div class="phead"><span>Layers</span><svg width="26" height="12"><g fill="none" stroke="#666"><rect x=".5" y=".5" width="10" height="10" rx="2"/><path d="M3 5.500h3.500v3H3zM5 5V3h3.500v3.500H7"/><rect x="14.500" y=".5" width="10" height="10" rx="2"/><path d="M17 3l5 5M22 3l-5 5" stroke-width="2"/></g></svg></div>
  <div class="ptools"><svg><use href="#brush"/></svg><svg><use href="#groupadd"/></svg><svg><use href="#eye"/></svg><svg><use href="#funnel"/></svg><svg><use href="#eps"/></svg><i class="drop"></i><svg><use href="#expand"/></svg><svg><use href="#collapse"/></svg><svg><use href="#remove"/></svg></div>
  <div class="tree">
    <div class="row"><b class="tri open"></b><i class="cb on"></i><svg class="gi"><use href="#group"/></svg><span class="t0">Lane Geometry</span></div>
    <div class="row lyr cur"><i class="cb on"></i><svg class="pt"><circle cx="9.500" cy="9.500" r="4.800" fill="#bf9544" stroke="#555"/></svg><span class="l1">Reference Point [1]</span><svg class="chip"><use href="#chip"/></svg></div>
    <div class="row lyr"><i class="cb on"></i><svg class="pt"><circle cx="9.500" cy="9.500" r="4.800" fill="#e8714a" stroke="#444"/></svg><span class="l2">Waypoint [0]</span><svg class="chip"><use href="#chip"/></svg></div>
    <div class="row lyr"><i class="cb on"></i><svg class="pt"><circle cx="9.500" cy="9.500" r="4.800" fill="#b5cf49" stroke="#444"/></svg><span class="l3">Input Polygon Points [0]</span><svg class="chip"><use href="#chip"/></svg></div>
    <div class="row lyr fill"><i class="cb on"></i><i class="sw peach"></i><span class="l4">Input Polygon [0]</span><svg class="chip"><use href="#chip"/></svg></div>
    <div class="row lyr fill"><i class="cb on"></i><i class="sw aqua"></i><span class="l5">Occupied Region [0]</span><svg class="chip"><use href="#chip"/></svg></div>
    <div class="row lyr fill"><i class="cb on"></i><svg class="sy"><path d="M0 7h18" stroke="red" stroke-width="5"/><path d="M0 1l6 4v4l-6 4zM18 1l-6 4v4l6 4z" fill="#000"/></svg><span class="l6">Lane Edge [40]</span><svg class="chip"><use href="#chip"/></svg></div>
    <div class="row lyr fill off"><i class="cb"></i><svg class="sy"><use href="#lane-in"/></svg><span class="l7">Contact Traffic_Light [0]</span><svg class="chip"><use href="#chip"/></svg></div>
    <div class="row lyr fill off"><i class="cb"></i><svg class="sy"><use href="#lane-in"/></svg><span class="l8">Lane Orientation [20]</span><svg class="chip"><use href="#chip"/></svg></div>
    <div class="row lyr fill"><i class="cb on"></i><svg class="sy"><path d="M.5 5h10V2.500l7.500 4.500-7.500 4.500V9H.5z" fill="#a9a52a" stroke="#333"/><path d="M10.500 3l7 4-7 4z" fill="#ff0"/></svg><span class="l9">Lane Direction [20]</span><svg class="chip"><use href="#chip"/></svg></div>
    <div class="row"><b class="tri"></b><i class="cb on"></i><svg class="gi"><use href="#group"/></svg><span class="t1">Lane Types</span></div>
    <div class="row"><b class="tri"></b><i class="cb on"></i><svg class="gi"><use href="#group"/></svg><span class="t2">Speed Limits</span></div>
    <div class="row"><b class="tri"></b><i class="cb on"></i><svg class="gi"><use href="#group"/></svg><span class="t3">Contact Type</span></div>
    <div class="row"><b class="tri"></b><i class="cb on"></i><svg class="gi"><use href="#group"/></svg><span class="t4">Topology</span></div>
    <div class="row"><b class="tri none"></b><i class="cb on"></i><svg class="gi"><use href="#group"/></svg><span class="t5">Miscellaneous</span></div>
    <div class="row"><b class="tri"></b><i class="cb on"></i><svg class="gi"><use href="#group"/></svg><span class="t6">Landmarks</span></div>
  </div>
</aside>
<div class="splitter"><i></i></div>
<section class="canvas">
<svg class="map" viewBox="372 207 1506 571">
<defs>
<path id="junction" d="M947 602L1071 600Q1074 613 1094 615L1095 697Q1072 697 1069 714L945 711Q944 697 925 698L924 616Q945 616 947 602z"/>
<clipPath id="jc"><use href="#junction"/></clipPath>
<path id="oct" d="M-5.500-13.500h11l8 8v11l-8 8h-11l-8-8v-11z"/>
</defs>
<g fill="#c8c8ee">
<path d="M931 207L933 285 947 602 1071 600 1057 283 1055 207zM945 711L940 778H1065L1069 714z"/>
<path d="M372 621L924 616 925 698 372 702.500zM1093 614L1553.500 610 1878 612.500V693.500L1554 691.500 1095 697z"/>
</g>
<use href="#junction" fill="#b4d6b1" stroke="#9cbfa5" stroke-width=".7"/>
<path d="M948 615H1070V697H947z" fill="#93c595"/>
<g fill="#a83068">
<use href="#oct" x="978" y="602"/><use href="#oct" x="1093.500" y="635.500"/><use href="#oct" x="925" y="677"/><use href="#oct" x="1038" y="714.500"/>
</g>
<g clip-path="url(#jc)" fill="#a97f66">
<use href="#oct" x="978" y="602"/><use href="#oct" x="1093.500" y="635.500"/><use href="#oct" x="925" y="677"/><use href="#oct" x="1038" y="714.500"/>
</g>
<g class="stop" text-anchor="middle">
<text x="978" y="608" textLength="25" lengthAdjust="spacingAndGlyphs">STOP</text><text x="1093.500" y="641.500" textLength="25" lengthAdjust="spacingAndGlyphs">STOP</text><text x="925" y="683" textLength="25" lengthAdjust="spacingAndGlyphs">STOP</text><text x="1038" y="720.500" textLength="25" lengthAdjust="spacingAndGlyphs">STOP</text>
</g>
<path d="M973 611.500h10M1089 645h10M920 686.500h10M1033 724h10" stroke="#c98ba0" stroke-width="1"/>
<g class="edge">
<path d="M931 207L933 285 947 602M993 207L995 284 1009 601M1055 207L1057 283 1071 600"/>
<path d="M945 711L940 778M1007 713L1002 778M1069 714L1065 778"/>
<path d="M372 621L403 620.500 924 616M372 662L404 661.500 924.500 657M372 702.500L405 702 925.500 697.500"/>
<path d="M1093 614L1553.500 610 1878 612.500M1094 655.500L1554 651 1878 653.500M1095 696.500L1554 691.500 1878 693.500"/>
<path d="M947 602L948 656 945 711M1009 601L1009 656 1007 713M1071 600L1072 656 1069 714"/>
<path d="M924 616L948 615 1093 614M924.500 657L1094 655.500M925.500 697.500L1095 696.500"/>
</g>
<g class="edge fat">
<path d="M958 656Q980 648 1009 623M958 656Q980 666 1007 691M1060 655.500Q1036 647 1009 623M1060 655.500Q1036 666 1007 691"/>
<path d="M950 656.500L966 649V664zM1068 655.500L1050 648V663zM1009 618l9 9-9 7-9-7zM1008 697l9-9-9-7-9 7z" stroke-width="2" fill="red"/>
</g>
<g class="edge mid">
<path d="M949 615Q980 616 1008 627Q1040 615 1070 613M949 697Q980 696 1008 686Q1040 696 1070 697M949 615Q954 640 965 656Q953 675 949 697M1070 613Q1066 640 1054 655Q1066 675 1070 697"/>
</g>
<g fill="#ff0" stroke="#222" stroke-width="1.100">
<path d="M965 621.500l4.500 8h-9zM963.500 679.500l4.500 8h-9zM1055 632l4.500-8h-9zM1052 691.500l4.500-8h-9z"/>
</g>
<g fill="#ff0" stroke="#222" stroke-width=".9">
<path d="M1001 635.500l7-4.500v3.500h10v2h-10v3.500zM1018 676.500l-7-4.500v3.500h-10v2h10v3.500z"/>
<path d="M1003 650l3-2M1012 649l4 1M1003 662l3 2M1013 662l3-2M978 651v10M1040 650v10" stroke="#f3d21b" stroke-width="2"/>
</g>
<g class="edge"><path d="M1009 601L1009 656 1007 713"/></g>
<g class="dots">
<path d="M947 602L948 656 945 711M1009 601L1009 656 1007 713M1071 600L1072 656 1069 714"/>
<path d="M958 615L1071 613.500M940 656.500L1081 655.500M958 697L1070 696.500" stroke-dasharray="0 17"/>
<path d="M963 653Q980 647 1008 622M963 660Q980 667 1007 692M1056 651Q1035 647 1009 622M1056 660Q1035 665 1008 692" stroke-dasharray="0 12"/>
<path d="M985 641l4-3M985 671l4 3M1032 641l-4-3M1032 671l-4 3" stroke-width="7" stroke-dasharray="none"/>
<path d="M949 615Q980 616 1008 627Q1040 615 1070 613M949 697Q980 696 1008 686Q1040 696 1070 697M949 615Q954 640 965 656Q953 675 949 697M1070 613Q1066 640 1054 655Q1066 675 1070 697" stroke-dasharray="0 16"/>
<path class="dense" d="M924 616Q944 616 947 602M1071 600Q1074 613 1093 614M925 698Q944 696 945 711M1095 696Q1070 697 1069 714"/>
</g>
<g class="nodes">
<path d="M947 602h0M1009 601h0M1071 600h0M924 616h0M1093 614.500h0M924.500 657h0M1094 655.500h0M925.500 697.500h0M1095 696h0M945 711h0M1007 713h0M1069 714.500h0"/>
</g>
<g class="nodes small"><path d="M933 285.500h0M995 284.500h0M1057 283.500h0M403 620.500h0M404 661.500h0M405 702h0M1553.500 610.500h0M1553.500 651h0M1553.500 691.500h0"/></g>
<g fill="#c6c12a" stroke="#222" stroke-width="1.100">
<path d="M961.500 243.500h3l1.700 58h-3zM1028.500 307.500h-3l-1.700-58h3zM1734.500 631v2.600L1625 632v-2.600zM1617.500 670.300v2.600L1727 673.800v-2.600zM371 639.800h17v2.800h-17zM371 680.500h10v3h-10z"/>
<path d="M960 301.500l10-.3-4.800 8zM1020 250l10-.3-5-7.500zM1625 625.800v10l-7.500-5zM1727 667.500v10l7.500-5zM381 677v10l7.500-5z" fill="#ff0"/>
</g>
</svg>
<div class="dialog">
  <div class="dtitle"><span class="dot"></span><span class="dt">Enter influence distance</span><svg width="17" height="17"><circle cx="8.500" cy="8.500" r="7.700" fill="#ef5b2e" stroke="#9a3c1d" stroke-width=".8"/><path d="M6 6l5 5M11 6l-5 5" stroke="#5a2413" stroke-width="1.300"/></svg></div>
  <div class="dbody">
    <label>Distance:</label>
    <div class="spin"><span class="val">100.0</span><span class="ud"><i class="up"></i><i class="dn"></i></span></div>
    <div class="btns"><span class="btn"><svg width="18" height="18"><path d="M3.500 3.500l11.500 11.500M15 3.500L3.500 15" stroke="#3f3f3f" stroke-width="5"/><path d="M4 4l10.500 10.500M14.500 4L4 14.500" stroke="#6a6a6a" stroke-width="3"/></svg><span class="bt"><u>C</u>ancel</span></span><span class="btn ok"><svg width="18" height="18"><path d="M1.500 10l3.500-2 2.500 4.500L14 1.500l3 .5L8.500 16.500H6z" fill="#a8d84e" stroke="#6d9a2a"/></svg><span class="bt2"><u>O</u>K</span></span></div>
  </div>
</div>
</section>
</main>
</body>
</html>
```

FILE: styles.css
```css
* { box-sizing: border-box; }
body {
  margin: 0;
  width: 1878px;
  height: 778px;
  overflow: hidden;
  display: flex;
  flex-direction: column;
  background: #eeebe7;
  color: #111;
  font-family: "Noto Sans", "Open Sans", sans-serif;
  font-size: 17px;
  white-space: nowrap;
}
.defs { position: absolute; }
svg { flex: none; overflow: visible; }
u { text-decoration-thickness: 2px; text-underline-offset: 3px; text-decoration-skip-ink: none; }
.abc { font: bold 10.500px Roboto, sans-serif; }

.desktop { display: flex; height: 7px; flex: none; background: #3b3a36; }
.desktop i { height: 1px; }
.d1 { width: 22px; margin-left: 103px; background: #6d3833; }
.d2 { width: 34px; margin-left: 45px; background: #64635f; }
.d3 { width: 20px; margin-left: 15px; background: #61444f; }
.d4 { width: 20px; margin-left: 26px; background: #9da246; }
.d5 { width: 28px; margin-left: 20px; background: #8b8a86; }

.titlebar { display: flex; align-items: center; flex: none; height: 32px; border-top: 1px solid #4a4944; background: #3d3c37; color: #8d897f; }
.dot { width: 12px; height: 12px; border-radius: 50%; border: 3px solid #2a2926; background: #d8d8d6; flex: none; }
.titlebar .dot { margin-left: 8px; }
.title { flex: none; margin: -3px 0 0 14px; width: 1605px; font-size: 17.500px; letter-spacing: .3px; }
.winbtns { flex: none; margin-left: 212px; height: 16px; }

.menubar { display: flex; flex: none; height: 25px; align-items: center; padding-left: 6px; background: #f0ede9; line-height: 25px; }
.menubar span { flex: none; letter-spacing: .05px; }
.m1 { width: 74px; } .m2 { width: 48px; } .m3 { width: 56px; } .m4 { width: 60px; } .m5 { width: 83px; }
.m6 { width: 75px; } .m7 { width: 69px; } .m8 { width: 68px; } .m9 { width: 92px; } .m10 { width: 52px; }
.m11 { width: 59px; } .m12 { width: 103px; } .m13 { width: 45px; }

.toolbar { display: flex; align-items: center; flex: none; height: 47px; padding-left: 8.500px; border-bottom: 1px solid #b1aeab; background: linear-gradient(#f8f5f1, #efece7); }
.toolbar.first { height: 48px; border-top: 1px solid #d0cdc9; }
.toolbar.last { height: 46px; }
.ic { width: 32px; height: 32px; margin: 0 4.500px; }
.grip { flex: none; width: 18px; height: 18px; padding: 0 3px 0 7px; background: radial-gradient(circle, #bdbab6 .8px, transparent 1px) content-box 0 0 / 4px 4px; }
.grip.early { padding: 0 5px; }
.sep { flex: none; width: 8px; height: 28px; background: linear-gradient(90deg, transparent 4px, #d3d0cc 4px, #d3d0cc 5px, #fff 5px, #fff 6px, transparent 6px); }
.drop { flex: none; width: 15px; height: 5px; padding: 0 3px; background: #393836; background-clip: content-box; clip-path: polygon(3px 0, 12px 0, 7.500px 5px); }
.drop.off { background-color: #bfbcb8; }
.pressed { flex: none; width: 41px; height: 39px; border: 1px solid #b1aeab; border-radius: 3px; background: #dedbd8; display: flex; align-items: center; justify-content: center; }
.pressed svg { width: 32px; height: 32px; }

.work { display: flex; flex: 1; min-height: 0; border-top: 1px solid #f5f3f0; }
.panel { width: 364px; display: flex; flex-direction: column; }
.phead { display: flex; align-items: center; height: 24px; padding-right: 1px; }
.phead span { margin-left: -2px; width: 338.500px; letter-spacing: -.1px; }
.ptools { display: flex; align-items: center; height: 38px; padding: 0 0 1px 1px; }
.ptools svg { width: 26px; height: 26px; margin-right: 7px; }
.ptools .drop { margin-right: 3px; margin-left: -3px; }
.tree { flex: 1; background: #fff; border: 1px solid #b3b0ad; border-left: 0; border-bottom: 0; }
.row { display: flex; align-items: center; height: 23px; line-height: 22px; padding-left: 3px; letter-spacing: .15px; }
.tri { flex: none; width: 10px; height: 10px; margin-right: 10px; background: #444; clip-path: polygon(20% 0, 70% 50%, 20% 100%); }
.tri.open { clip-path: polygon(0 25%, 95% 25%, 48% 80%); }
.tri.none { background: none; }
.cb { flex: none; width: 17px; height: 17px; border: 1px solid #b0adaa; background: #fff; display: block; }
.cb.on::after { content: ""; display: block; width: 5px; height: 10px; margin: 1px 0 0 5px; border: solid #111; border-width: 0 2px 2px 0; transform: rotate(38deg) skewY(8deg); }
.gi { width: 20px; height: 20px; margin: 0 6px 0 6px; }
.lyr { font-weight: bold; padding-left: 48px; }
.lyr span { width: 238px; flex: none; }
.pt { width: 19px; height: 19px; margin: 0 6px 0 7px; }
.sw { flex: none; width: 18px; height: 18px; margin: 0 7px 0 6px; }
.peach { background: #fde6d6; } .aqua { background: #b5f1ef; }
.sy { width: 18px; height: 14px; margin: 0 7px 0 6px; }
.row.fill span { width: 240px; margin-left: -1px; }
.row .l1 { width: auto; margin-right: auto; letter-spacing: .2px; }
.cur .chip { margin-right: 8px; }
.row .l7 { letter-spacing: .65px; }
.row .l8 { letter-spacing: .45px; }
.cur { background: #308cc6; color: #fff; }
.cur span { text-decoration: underline; text-decoration-thickness: 2px; text-underline-offset: 4px; text-decoration-skip-ink: none; }
.off span { color: #888; font-style: italic; }
.chip { width: 20px; height: 20px; }

.splitter { width: 8px; flex: none; border-right: 1px solid #b3b0ad; display: flex; align-items: center; }
.splitter i { width: 5px; height: 22px; margin: 154px 0 0 1px; background: radial-gradient(circle, #c2bfbb .7px, transparent 1px) 0 0 / 3px 4px; }
.canvas { position: relative; flex: 1; background: #fff; border-top: 1px solid #b1aeab; overflow: hidden; }
.map { display: block; width: 1506px; height: 571px; }
.edge { fill: none; stroke: #f80206; stroke-width: 5px; }
.edge.fat { stroke-width: 8px; }
.edge.mid { stroke-width: 5.500px; }
.dots { fill: none; stroke: #000; stroke-width: 6.200px; stroke-linecap: round; stroke-dasharray: 0 11.300; }
.dots .dense { stroke-dasharray: 0 3; stroke-width: 5.500px; }
.nodes { stroke: #000; stroke-width: 11.800px; stroke-linecap: round; }
.nodes.small { stroke-width: 7px; }
.stop { font: 600 15px "Open Sans", sans-serif; fill: #f0dde2; }

.dialog { position: absolute; left: 70px; top: 131px; width: 369px; height: 153px; border-radius: 7px 7px 0 0; border: 1px solid #75726d; border-bottom: 1px solid #4e4c48; background: #eeebe7; overflow: hidden; }
.dtitle { display: flex; align-items: center; height: 32px; padding-left: 13px; background: linear-gradient(#4c4b45, #3d3c37); color: #dfdbd2; }
.dt { margin: -2px 0 0 14px; width: 302px; letter-spacing: .65px; }
.dbody { padding: 11px 13px; display: flex; flex-direction: column; }
.dbody label { height: 31px; line-height: 24px; letter-spacing: .2px; }
.spin { display: flex; height: 28px; border: 1px solid #3a84b5; border-radius: 3px; background: #fff; align-items: center; padding-left: 4px; }
.val { background: #308cc6; color: #fff; height: 21px; line-height: 21px; letter-spacing: .3px; }
.ud { margin-left: auto; width: 17px; height: 26px; border-left: 1px solid #bbb; display: flex; flex-direction: column; align-items: center; justify-content: space-between; padding: 5px 0; }
.up, .dn { width: 8px; height: 4px; background: #555; clip-path: polygon(0 100%, 50% 0, 100% 100%); }
.dn { clip-path: polygon(0 0, 100% 0, 50% 100%); }
.btns { display: flex; justify-content: flex-end; gap: 7px; margin-top: 8px; }
.btn { display: flex; align-items: center; width: 88px; height: 28px; padding-left: 6px; border: 1px solid #b3b0ad; border-radius: 3px; background: linear-gradient(#fefefe, #f1f0ee); line-height: 25px; }
.btn.ok { width: 80px; padding-left: 16px; border-color: #3a84b5; }
.bt { margin-left: 1px; letter-spacing: .2px; } .bt2 { margin-left: 2px; }
```
